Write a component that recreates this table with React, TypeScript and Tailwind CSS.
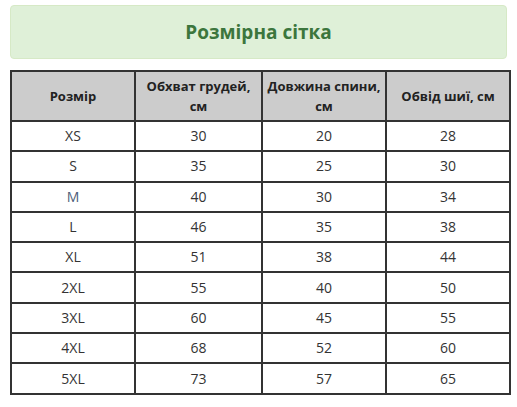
import React from "react";

const headers = ["Розмір", "Обхват грудей, см", "Довжина спини, см", "Обвід шиї, см"];
const widths = ["w-[124px]", "w-[127px]", "w-[124px]", "w-[124px]"];

const rows = [
  ["XS", "30", "20", "28"],
  ["S", "35", "25", "30"],
  ["M", "40", "30", "34"],
  ["L", "46", "35", "38"],
  ["XL", "51", "38", "44"],
  ["2XL", "55", "40", "50"],
  ["3XL", "60", "45", "55"],
  ["4XL", "68", "52", "60"],
  ["5XL", "73", "57", "65"],
];

export default function App() {
  return (
    <div className="w-[517px] h-[407px] bg-white font-['Open_Sans',sans-serif] text-[#333] pt-[5px] pl-[10px]">
      <div className="w-[497px] h-[54px] rounded-[4px] bg-[#dff0d8] border border-[#d6e9c6] flex items-center justify-center">
        <h2 className="text-[19px] font-bold text-[#3c763d]">Розмірна сітка</h2>
      </div>
      <table className="mt-[11px] w-[499px] table-fixed border-collapse border-2 border-[#333]">
        <thead>
          <tr className="h-[50px] bg-[#ccc]">
            {headers.map((h, i) => (
              <th
                key={h}
                className={`${widths[i]} border-2 border-[#333] px-[1px] text-[13px] font-bold leading-[20px] text-[#222]`}
              >
                {h}
              </th>
            ))}
          </tr>
        </thead>
        <tbody>
          {rows.map((r) => (
            <tr key={r[0]} className="h-[30.3px]">
              {r.map((c, i) => (
                <td
                  key={i}
                  className={`border-2 border-[#333] text-center text-[14px] leading-[18px] ${
                    i === 0 && c === "M" ? "text-[#4d5e7a]" : "text-[#333]"
                  }`}
                >
                  {c}
                </td>
              ))}
            </tr>
          ))}
        </tbody>
      </table>
    </div>
  );
}
